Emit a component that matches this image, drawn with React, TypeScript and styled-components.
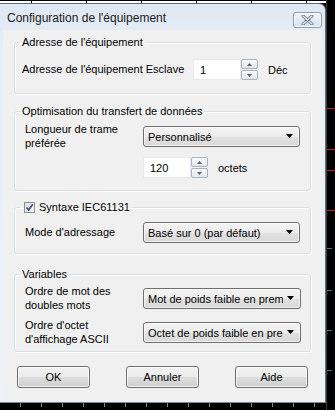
import React from 'react';
import styled, { createGlobalStyle } from 'styled-components';

const GlobalStyle = createGlobalStyle`
  html, body {
    margin: 0;
    padding: 0;
    background: #000;
  }
  body {
    font-family: 'Liberation Sans', Arial, sans-serif;
    font-size: 11px;
    color: #000;
  }
`;

const Screen = styled.div`
  width: 335px;
  height: 410px;
  display: grid;
  grid-template-columns: 326px 1fr;
  grid-template-rows: 3px 400px 1fr;
  background: #000;
  overflow: hidden;
`;

const TopRuler = styled.div`
  grid-column: 1;
  grid-row: 1;
  background:
    linear-gradient(#000, #000) 0 0 / 100% 1px no-repeat,
    repeating-linear-gradient(90deg, transparent 0 31px, #000 31px 32px, transparent 32px 55px),
    #fff;
`;

const SideStrip = styled.div`
  grid-column: 2;
  grid-row: 1 / 4;
  border-left: 1px solid #3a3a3a;
  background:
    linear-gradient(#c0202a, #c0202a) 0 108px / 100% 1px no-repeat,
    linear-gradient(#c0202a, #c0202a) 0 149px / 100% 1px no-repeat,
    linear-gradient(#c0202a, #c0202a) 0 170px / 100% 1px no-repeat,
    linear-gradient(#c0202a, #c0202a) 0 210px / 100% 1px no-repeat,
    linear-gradient(#6a6a6a, #6a6a6a) 0 248px / 5px 1px no-repeat,
    linear-gradient(#6a6a6a, #6a6a6a) 0 290px / 5px 1px no-repeat,
    linear-gradient(#6a6a6a, #6a6a6a) 0 330px / 5px 1px no-repeat,
    linear-gradient(#6a6a6a, #6a6a6a) 0 370px / 5px 1px no-repeat,
    #000;
`;

const BottomRuler = styled.div`
  grid-column: 1;
  grid-row: 3;
  background:
    repeating-linear-gradient(90deg, transparent 0 20px, #8a8a8a 20px 21px) 0 0 / 100% 4px no-repeat,
    #000;
`;

const Window = styled.div`
  grid-column: 1;
  grid-row: 2;
  display: flex;
  flex-direction: column;
  background: linear-gradient(#dde7f3, #e8eef6 40px, #eef2f7);
  border-top: 1px solid #5d6b7c;
  border-right: 1px solid #5d6b7c;
  border-bottom: 1px solid #7c8896;
  border-radius: 0 7px 0 0;
  box-sizing: border-box;
  padding: 0 3px 3px 3px;
  overflow: hidden;
`;

const TitleBar = styled.div`
  height: 26px;
  flex-shrink: 0;
  display: flex;
  align-items: center;
  justify-content: space-between;
  padding: 0 0 0 4px;
`;

const Title = styled.span`
  font-size: 12px;
  color: #1a1a1a;
  margin-top: 1px;
`;

const CloseButton = styled.div`
  width: 29px;
  height: 16px;
  margin-top: 6px;
  box-sizing: border-box;
  border: 1px solid #8e9db2;
  border-radius: 3px;
  background: linear-gradient(#eef3f9, #d9e3ef);
  box-shadow: inset 0 0 0 1px rgba(255, 255, 255, 0.7);
  display: flex;
  align-items: center;
  justify-content: center;
`;

const Client = styled.div`
  flex: 1;
  background: #f0f0f0;
  padding: 6px 11px 0 11px;
  display: flex;
  flex-direction: column;
`;

const Group = styled.fieldset<{ $pt: number; $pb: number; $mt: number }>`
  margin: ${p => p.$mt}px 0 0 0;
  padding: ${p => p.$pt}px 10px ${p => p.$pb}px 10px;
  border: 1px solid #d5dfe5;
  border-radius: 3px;
  box-shadow: inset 1px 1px 0 #fff, 1px 1px 0 #fff;
  min-width: 0;
  display: flex;
  flex-direction: column;
`;

const Legend = styled.legend`
  padding: 0 2px;
  margin-left: -5px;
  line-height: 13px;
  display: flex;
  align-items: center;
`;

const CheckBox = styled.span`
  width: 11px;
  height: 11px;
  box-sizing: border-box;
  border: 1px solid #8e8f8f;
  background: linear-gradient(135deg, #dcdcdc, #fbfbfb);
  display: inline-flex;
  align-items: center;
  justify-content: center;
  margin: 0 4px 0 2px;
`;

const Row = styled.div<{ $gap?: number; $indent?: number }>`
  display: flex;
  align-items: center;
  margin-top: ${p => p.$gap ?? 0}px;
  margin-left: ${p => p.$indent ?? 0}px;
`;

const Label = styled.div<{ $w?: number }>`
  width: ${p => p.$w ?? 118}px;
  flex-shrink: 0;
  line-height: 13.5px;
`;

const Select = styled.div`
  width: 158px;
  height: 21px;
  box-sizing: border-box;
  border: 1px solid #707070;
  border-radius: 3px;
  background: linear-gradient(#f4f4f4 0%, #ececec 50%, #e1e1e1 51%, #d9d9d9 100%);
  box-shadow: inset 0 0 0 1px rgba(255, 255, 255, 0.6);
  display: flex;
  align-items: center;
  padding: 0 5px 0 4px;
  gap: 4px;
`;

const SelectText = styled.span`
  flex: 1;
  white-space: nowrap;
  overflow: hidden;
`;

const Spinner = styled.div`
  display: flex;
  align-items: stretch;
  height: 21px;
`;

const SpinInput = styled.div`
  width: 48px;
  box-sizing: border-box;
  background: #fff;
  border: 1px solid #e6eaee;
  display: flex;
  align-items: center;
  padding-left: 6px;
`;

const SpinButtons = styled.div`
  width: 17px;
  display: flex;
  flex-direction: column;
  gap: 1px;
`;

const SpinButton = styled.div`
  flex: 1;
  box-sizing: border-box;
  border: 1px solid #aab4c0;
  border-radius: 2px;
  background: linear-gradient(#fbfbfb, #e4e7eb);
  display: flex;
  align-items: center;
  justify-content: center;
`;

const Unit = styled.span`
  margin-left: 10px;
`;

const ButtonBar = styled.div`
  margin-top: 14px;
  display: flex;
  justify-content: space-between;
  padding: 0 3px;
`;

const Button = styled.div`
  width: 73px;
  height: 22px;
  box-sizing: border-box;
  border: 1px solid #707070;
  border-radius: 3px;
  background: linear-gradient(#f2f2f2 0%, #ebebeb 50%, #dddddd 51%, #cfcfcf 100%);
  box-shadow: inset 0 0 0 1px rgba(255, 255, 255, 0.7);
  display: flex;
  align-items: center;
  justify-content: center;
`;

const DropArrow = () => (
  <svg width="8" height="5" viewBox="0 0 8 5">
    <path d="M0 0 H7 L3.5 4 Z" fill="#000" />
  </svg>
);

const Tri: React.FC<{ up?: boolean }> = ({ up }) => (
  <svg width="5" height="3" viewBox="0 0 5 3">
    <path d={up ? 'M0 3 H5 L2.5 0 Z' : 'M0 0 H5 L2.5 3 Z'} fill="#4d5f7e" />
  </svg>
);

const SpinBox: React.FC<{ value: string }> = ({ value }) => (
  <Spinner>
    <SpinInput>{value}</SpinInput>
    <SpinButtons>
      <SpinButton><Tri up /></SpinButton>
      <SpinButton><Tri /></SpinButton>
    </SpinButtons>
  </Spinner>
);

const Dropdown: React.FC<{ value: string }> = ({ value }) => (
  <Select>
    <SelectText>{value}</SelectText>
    <DropArrow />
  </Select>
);

export default function App() {
  return (
    <>
      <GlobalStyle />
      <Screen>
        <TopRuler />
        <Window>
          <TitleBar>
            <Title>Configuration de l'équipement</Title>
            <CloseButton>
              <svg width="13" height="10" viewBox="0 0 13 10">
                <path
                  d="M2 1 L11 9 M11 1 L2 9"
                  stroke="#5b6576"
                  strokeWidth="3"
                  strokeLinecap="round"
                />
                <path
                  d="M2 1 L11 9 M11 1 L2 9"
                  stroke="#f4f6f9"
                  strokeWidth="1.4"
                  strokeLinecap="round"
                />
              </svg>
            </CloseButton>
          </TitleBar>
          <Client>
            <Group $mt={0} $pt={10} $pb={13}>
              <Legend>Adresse de l'équipement</Legend>
              <Row $indent={-3}>
                <Label $w={171}>Adresse de l'équipement Esclave</Label>
                <SpinBox value="1" />
                <Unit>Déc</Unit>
              </Row>
            </Group>

            <Group $mt={11} $pt={5} $pb={12}>
              <Legend>Optimisation du transfert de données</Legend>
              <Row>
                <Label>Longueur de trame<br />préférée</Label>
                <Dropdown value="Personnalisé" />
              </Row>
              <Row $gap={7} $indent={118}>
                <SpinBox value="120" />
                <Unit>octets</Unit>
              </Row>
            </Group>

            <Group $mt={10} $pt={8} $pb={10}>
              <Legend>
                <CheckBox>
                  <svg width="9" height="9" viewBox="0 0 9 9">
                    <path d="M1.5 4.5 L3.6 7 L7.8 1.2" stroke="#3d5490" strokeWidth="1.8" fill="none" />
                  </svg>
                </CheckBox>
                Syntaxe IEC61131
              </Legend>
              <Row>
                <Label>Mode d'adressage</Label>
                <Dropdown value="Basé sur 0 (par défaut)" />
              </Row>
            </Group>

            <Group $mt={14} $pt={4} $pb={5}>
              <Legend>Variables</Legend>
              <Row>
                <Label>Ordre de mot des<br />doubles mots</Label>
                <Dropdown value="Mot de poids faible en premier" />
              </Row>
              <Row $gap={7}>
                <Label>Ordre d'octet<br />d'affichage ASCII</Label>
                <Dropdown value="Octet de poids faible en premier" />
              </Row>
            </Group>

            <ButtonBar>
              <Button>OK</Button>
              <Button>Annuler</Button>
              <Button>Aide</Button>
            </ButtonBar>
          </Client>
        </Window>
        <SideStrip />
        <BottomRuler />
      </Screen>
    </>
  );
}
